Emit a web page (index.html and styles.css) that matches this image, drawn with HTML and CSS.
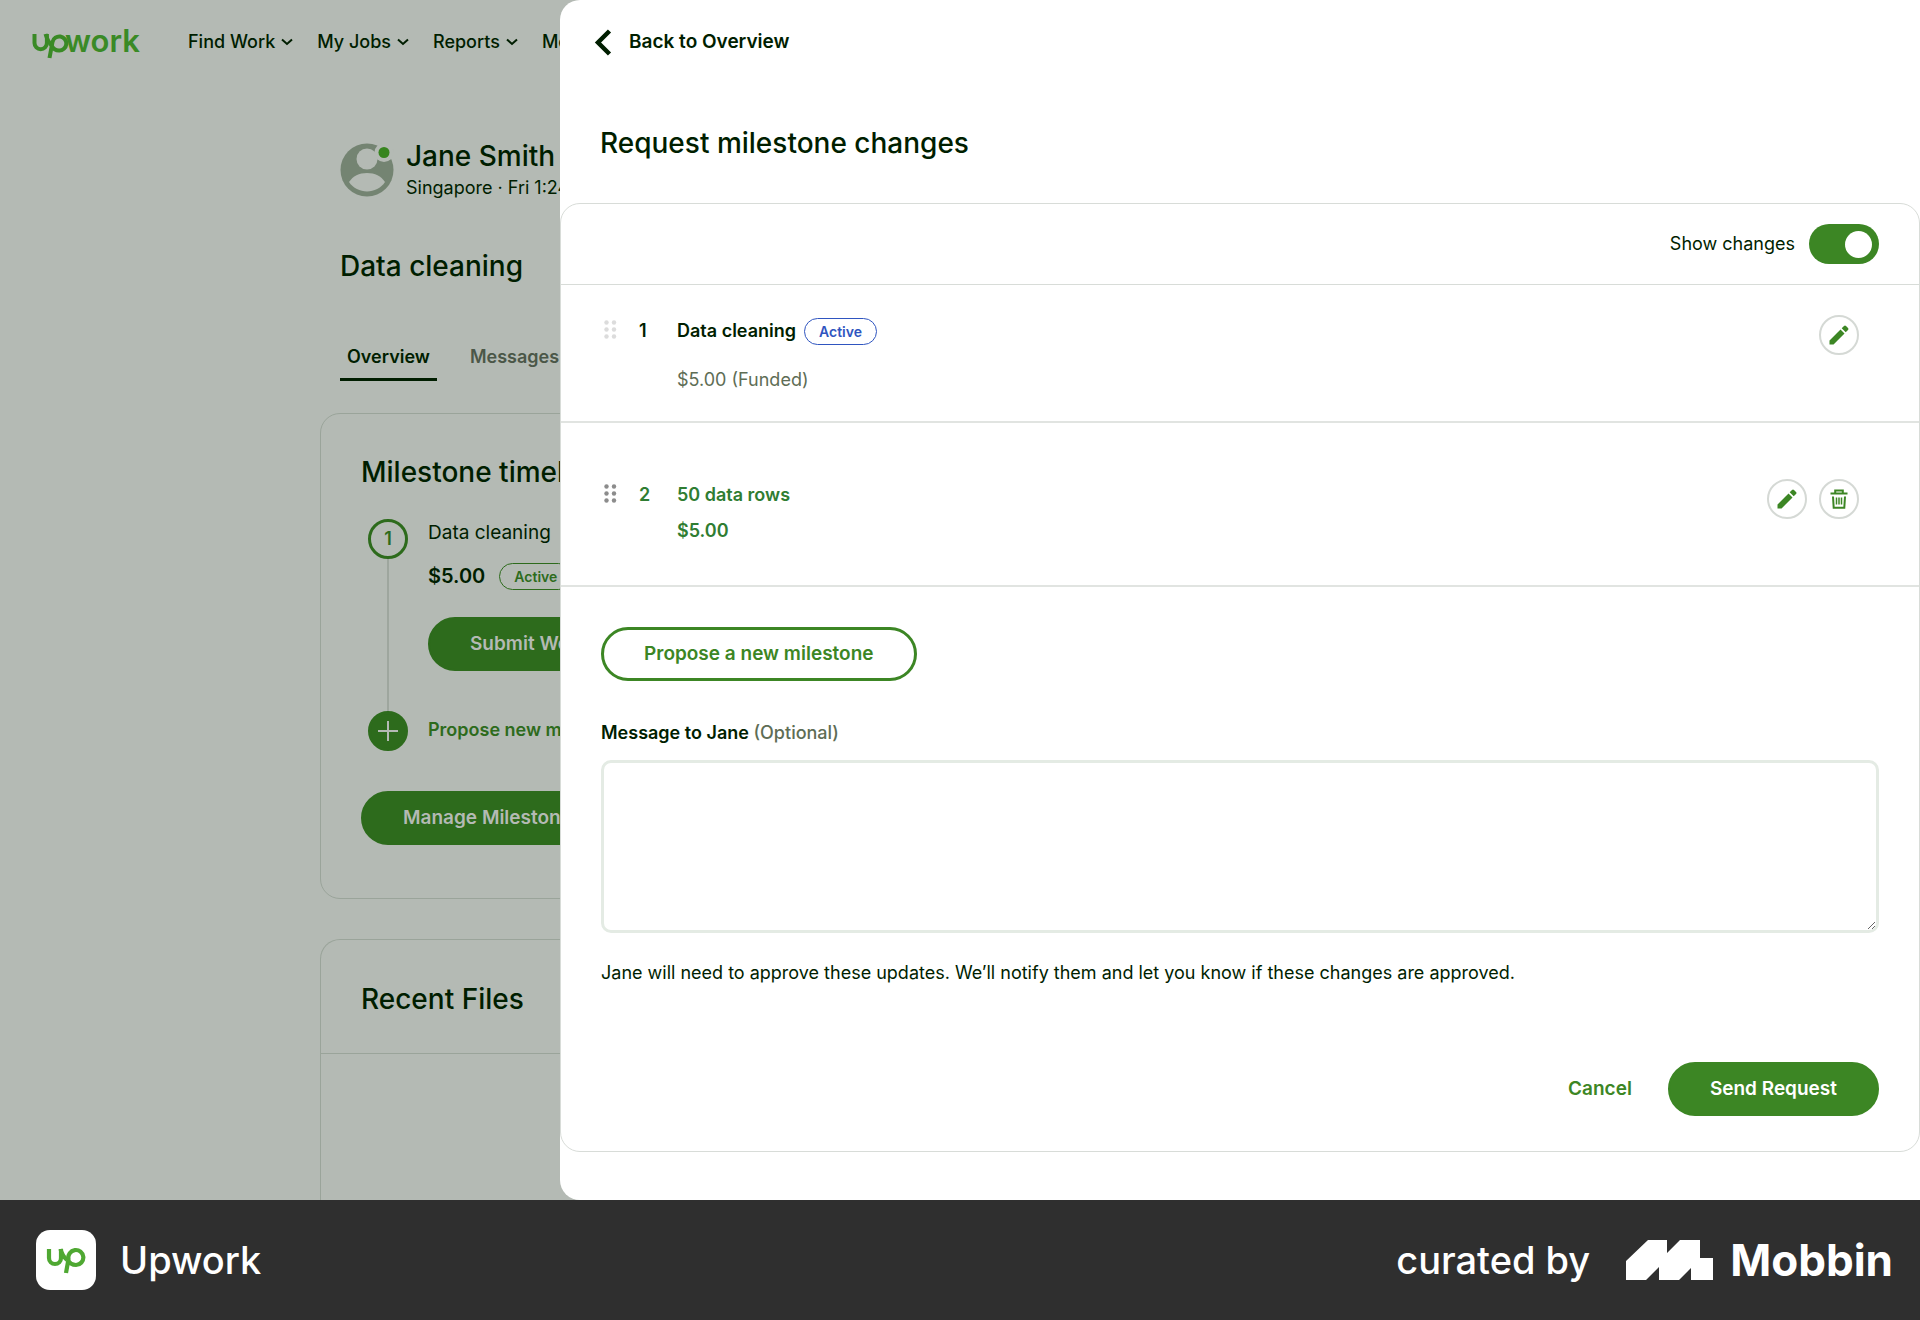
FILE: index.html
```html
<!DOCTYPE html>
<html lang="en">
<head>
<meta charset="utf-8">
<title>Request milestone changes</title>
<link rel="stylesheet" href="styles.css">
</head>
<body>
<div class="app">
  <div class="page">
    <header class="topbar">
      <a class="logo" href="#" aria-label="Upwork home">
        <svg width="116" height="40" viewBox="0 0 116 40" aria-hidden="true">
          <g fill="none" stroke="#3a8a26" stroke-width="4">
            <path d="M2.500 12v9a6.200 6.200 0 0 0 12.400 0V12"/>
            <path d="M13.500 12C15 17 17 21 20.500 24.500"/>
            <path d="M17.500 36l3-16a7 7 0 1 1 6.500 8.500c-3.500 0-6-2-7.500-5"/>
          </g>
          <text class="logo-text" x="33" y="30">work</text>
        </svg>
      </a>
      <nav class="nav">
        <a href="#">Find Work <svg class="caret" viewBox="0 0 12 8"><path d="M1 1.500l5 4.500 5-4.500"/></svg></a>
        <a href="#">My Jobs <svg class="caret" viewBox="0 0 12 8"><path d="M1 1.500l5 4.500 5-4.500"/></svg></a>
        <a href="#">Reports <svg class="caret" viewBox="0 0 12 8"><path d="M1 1.500l5 4.500 5-4.500"/></svg></a>
        <a href="#">Messages</a>
      </nav>
    </header>
    <main class="contract">
      <div class="person">
        <svg class="avatar" width="54" height="54" viewBox="0 0 54 54" aria-hidden="true">
          <circle cx="27" cy="27" r="26.500" fill="#748472"/>
          <circle cx="27" cy="16" r="10.500" fill="#b4bab4"/>
          <path d="M9 39c4-6 10-9 18-9s14 3 18 9c-4 6-11 9.500-18 9.500S13 45 9 39z" fill="#b4bab4"/>
          <circle cx="44" cy="9.500" r="9.500" fill="#b4bab4"/>
          <circle cx="44" cy="9.500" r="5.500" fill="#37851f"/>
        </svg>
        <div>
          <h2 class="title">Jane Smith</h2>
          <p class="place">Singapore · Fri 1:24 PM</p>
        </div>
      </div>
      <h1 class="title job">Data cleaning</h1>
      <nav class="tabs">
        <a class="tab active" href="#">Overview</a>
        <a class="tab" href="#">Messages</a>
      </nav>
      <section class="card timeline">
        <h2 class="title">Milestone timeline</h2>
        <ol class="steps">
          <li class="step">
            <div class="rail"><span class="dot">1</span><span class="line"></span></div>
            <div class="step-body">
              <p class="step-name">Data cleaning</p>
              <p class="step-price">$5.00 <span class="pill green">Active</span></p>
              <button class="btn dim" type="button">Submit Work</button>
            </div>
          </li>
          <li class="step">
            <div class="rail"><span class="dot plus"><svg width="20" height="20" viewBox="0 0 20 20"><path d="M10 0v20M0 10h20" stroke="#b4bab4" stroke-width="2"/></svg></span></div>
            <a class="propose" href="#">Propose new milestone</a>
          </li>
        </ol>
        <button class="btn dim" type="button">Manage Milestones</button>
      </section>
      <section class="card files">
        <h2 class="title">Recent Files</h2>
      </section>
    </main>
  </div>

  <aside class="drawer" aria-label="Request milestone changes">
    <a class="back" href="#">
      <svg width="18" height="27" viewBox="0 0 18 27" aria-hidden="true"><path d="M15.500 2L4 13.500 15.500 25" fill="none" stroke="#001e00" stroke-width="4.500"/></svg>
      Back to Overview
    </a>
    <h1 class="title drawer-title">Request milestone changes</h1>
    <form class="panel">
      <div class="panel-top">
        <label for="show">Show changes</label>
        <input class="switch" id="show" type="checkbox" role="switch" checked>
      </div>
      <div class="row">
        <svg class="grip faint" viewBox="0 0 13 19"><circle cx="2.500" cy="2.500" r="2.200"/><circle cx="10" cy="2.500" r="2.200"/><circle cx="2.500" cy="9.500" r="2.200"/><circle cx="10" cy="9.500" r="2.200"/><circle cx="2.500" cy="16.500" r="2.200"/><circle cx="10" cy="16.500" r="2.200"/></svg>
        <span class="num">1</span>
        <div class="row-text">
          <p class="row-name">Data cleaning <span class="pill blue">Active</span></p>
          <p class="funded">$5.00 (Funded)</p>
        </div>
        <div class="actions">
          <button class="round" type="button" aria-label="Edit"><svg width="20" height="20" viewBox="0 0 20 20"><path d="M0.500 15.500L11.500 4.500l4 4-11 11h-4zM12.700 3.300L15 1q1-1 2 0l2 2q1 1 0 2l-2.300 2.300z"/></svg></button>
        </div>
      </div>
      <div class="row tall">
        <svg class="grip" viewBox="0 0 13 19"><circle cx="2.500" cy="2.500" r="2.200"/><circle cx="10" cy="2.500" r="2.200"/><circle cx="2.500" cy="9.500" r="2.200"/><circle cx="10" cy="9.500" r="2.200"/><circle cx="2.500" cy="16.500" r="2.200"/><circle cx="10" cy="16.500" r="2.200"/></svg>
        <span class="num">2</span>
        <div class="row-text">
          <p class="row-name">50 data rows</p>
          <p class="amount">$5.00</p>
        </div>
        <div class="actions">
          <button class="round" type="button" aria-label="Edit"><svg width="20" height="20" viewBox="0 0 20 20"><path d="M0.500 15.500L11.500 4.500l4 4-11 11h-4zM12.700 3.300L15 1q1-1 2 0l2 2q1 1 0 2l-2.300 2.300z"/></svg></button>
          <button class="round" type="button" aria-label="Delete"><svg class="trash" width="20" height="20" viewBox="0 0 20 20"><path d="M1.500 4.500h17M6.200 4V1.500h7.600V4M4 7.500l.7 11.300h10.600L16 7.500"/><path class="slats" d="M7.500 8.500v7M10 8.500v7M12.500 8.500v7"/></svg></button>
        </div>
      </div>
      <div class="panel-body">
        <button class="btn outline" type="button">Propose a new milestone</button>
        <label class="msg-label" for="msg">Message to Jane <span class="opt">(Optional)</span></label>
        <textarea class="msg" id="msg"></textarea>
        <p class="note">Jane will need to approve these updates. We’ll notify them and let you know if these changes are approved.</p>
        <div class="foot">
          <button class="btn text" type="button">Cancel</button>
          <button class="btn" type="submit">Send Request</button>
        </div>
      </div>
    </form>
  </aside>
</div>
<footer class="credit">
  <span class="app-icon"><svg width="40" height="28" viewBox="0 0 40 28" aria-hidden="true"><g fill="none" stroke="#4fa832" stroke-width="4.200"><path d="M3 3v9a6 6 0 0 0 12 0V3"/><path d="M14.500 3c1 4 3 8 6.500 11"/><path d="M20 27l2.500-14a7.500 7.500 0 1 1 7.500 6c-4 0-6.500-2-8-5"/></g></svg></span>
  <span class="app-name">Upwork</span>
  <span class="by">curated by</span>
  <svg class="mobbin-mark" width="88" height="40" viewBox="0 0 88 40" aria-hidden="true"><path d="M0 21L22 0h19v13L54 0h20v18h13v22H65V28L53 40H33V27L20 40H0z" fill="#fff"/></svg>
  <span class="mobbin">Mobbin</span>
</footer>
</body>
</html>
```
FILE: styles.css
```css
* { box-sizing: border-box; }
body {
  margin: 0;
  min-height: 100vh;
  display: grid;
  grid-template-rows: 1fr 120px;
  font-family: Inter, "Liberation Sans", sans-serif;
  font-size: 18px;
  line-height: 28px;
  font-weight: 500;
  color: #001e00;
}
h1, h2, p, ol { margin: 0; padding: 0; font-weight: inherit; }
a { color: inherit; text-decoration: none; }
button, textarea { font: inherit; }
.title { font-size: 28px; line-height: 36px; font-weight: 500; }

.app { display: grid; background: #b4bab4; overflow: hidden; }
.page { grid-area: 1 / 1; min-width: 0; display: flex; flex-direction: column; }
.topbar { display: flex; align-items: center; gap: 40px; height: 84px; padding-left: 32px; white-space: nowrap; }
.logo { display: flex; }
.logo-text { font-family: Inter, sans-serif; font-size: 31px; font-weight: 600; fill: #3a8a26; }
.nav { display: flex; gap: 24px; }
.nav a { display: flex; align-items: center; gap: 6px; }
.caret { width: 12px; height: 8px; fill: none; stroke: #001e00; stroke-width: 2; }

.contract { flex: 1; display: flex; flex-direction: column; padding: 54px 320px 0; }
.person { display: flex; align-items: center; gap: 12px; padding: 0 20px; }
.place { font-weight: 400; }
.job { margin: 46px 20px 0; }
.tabs { display: flex; gap: 26px; margin: 59px 20px 0; }
.tab { padding: 0 7px 7px; border-bottom: 3px solid transparent; color: #4b5748; font-weight: 600; }
.tab.active { color: #001e00; border-color: #001e00; }
.card { border: 1px solid #9aa49a; border-radius: 20px; }
.timeline { margin-top: 32px; padding: 40px 40px 53px; }
.steps { list-style: none; margin: 29px 0 40px 7px; }
.step { display: flex; gap: 20px; }
.rail { width: 40px; display: flex; flex-direction: column; align-items: center; }
.dot { width: 40px; height: 40px; flex: none; border: 3px solid #2d6b1c; border-radius: 50%; color: #2d6b1c; display: flex; align-items: center; justify-content: center; font-weight: 600; }
.dot.plus { background: #2d6b1c; }
.line { width: 2px; flex: 1; background: #9ea69e; }
.step-body { padding-bottom: 40px; }
.step-name { font-weight: 400; font-size: 19px; }
.step-price { display: flex; align-items: center; gap: 14px; margin: 15px 0 27px; font-size: 20px; font-weight: 600; }
.propose { color: #2d6b1c; line-height: 38px; font-weight: 600; white-space: nowrap; }

.pill { font-size: 14px; line-height: 25px; padding: 0 14px; border: 1px solid; border-radius: 14px; font-weight: 600; }
.green { color: #2d6b1c; }
.blue { color: #2f55c0; }

.btn { height: 54px; padding: 0 40px; border: 2px solid #3c8624; border-radius: 27px; background: #3c8624; color: #fff; font-size: 19px; font-weight: 600; white-space: nowrap; }
.btn.dim { background: #2d6b1c; border-color: #2d6b1c; color: #b4bab4; }
.btn.outline { background: #fff; border-width: 3px; color: #3c8624; align-self: flex-start; }
.btn.text { background: none; border-color: transparent; color: #3c8624; padding: 0 34px; }

.files { flex: 1; margin-top: 40px; border-bottom: 0; border-radius: 20px 20px 0 0; }
.files .title { padding: 41px 40px 36px; border-bottom: 1px solid #9aa49a; }

.drawer { grid-area: 1 / 1; margin-left: 560px; background: #fff; border-radius: 20px 0 0 20px; display: flex; flex-direction: column; padding-bottom: 48px; z-index: 1; }
.back { display: flex; align-items: center; gap: 17px; height: 84px; padding-left: 34px; font-size: 19px; font-weight: 600; align-self: flex-start; }
.drawer-title { margin: 41px 40px 42px; }
.panel { flex: 1; border: 1px solid #d8dcd8; border-radius: 20px; }
.panel-top { display: flex; align-items: center; justify-content: flex-end; gap: 14px; height: 81px; padding-right: 40px; border-bottom: 1px solid #d8dcd8; font-weight: 400; }
.switch { appearance: none; width: 70px; height: 40px; margin: 0; border-radius: 20px; background: #3c8624; display: flex; align-items: center; justify-content: flex-end; padding: 7px; }
.switch::before { content: ""; width: 27px; height: 27px; border-radius: 50%; background: #fff; }
.row { display: flex; align-items: flex-start; height: 138px; padding: 30px 60px 0 43px; border-bottom: 2px solid #e1e4e1; font-weight: 600; }
.row.tall { height: 164px; padding-top: 56px; color: #2f7d32; }
.grip { width: 13px; height: 19px; margin-top: 5px; fill: #8c8c8c; }
.grip.faint { fill: #dcdcdc; }
.num { width: 38px; margin: 2px 0 0 22px; }
.row-text { flex: 1; margin-top: 2px; }
.row-name { display: flex; align-items: center; gap: 8px; }
.funded { margin-top: 21px; font-weight: 400; color: #5e6d55; }
.amount { margin-top: 8px; }
.actions { display: flex; gap: 12px; }
.round { width: 40px; height: 40px; padding: 0; border: 2px solid #d5d9d5; border-radius: 50%; background: #fff; fill: #3c8624; display: flex; align-items: center; justify-content: center; }
.trash { fill: none; stroke: #3c8624; stroke-width: 2; }
.slats { stroke-width: 1.5; }
.panel-body { display: flex; flex-direction: column; padding: 40px 40px 34px; }
.msg-label { margin-top: 38px; font-weight: 600; }
.opt { color: #5e6d55; font-weight: 500; }
.msg { height: 173px; margin-top: 13px; border: 3px solid #e4ebe4; border-radius: 10px; resize: vertical; }
.note { margin-top: 26px; font-weight: 400; }
.foot { display: flex; justify-content: flex-end; margin-top: 75px; }

.credit { background: #2f2f2f; color: #fff; display: flex; align-items: center; padding: 0 27px 0 36px; }
.app-icon { width: 60px; height: 60px; border-radius: 14px; background: #fff; display: flex; align-items: center; justify-content: center; }
.app-name, .by { font-size: 38px; line-height: 48px; }
.app-name { margin-left: 24px; }
.by { margin-left: auto; }
.mobbin-mark { margin: 0 16px 0 36px; }
.mobbin { font-size: 44px; line-height: 48px; font-weight: 700; }
```
